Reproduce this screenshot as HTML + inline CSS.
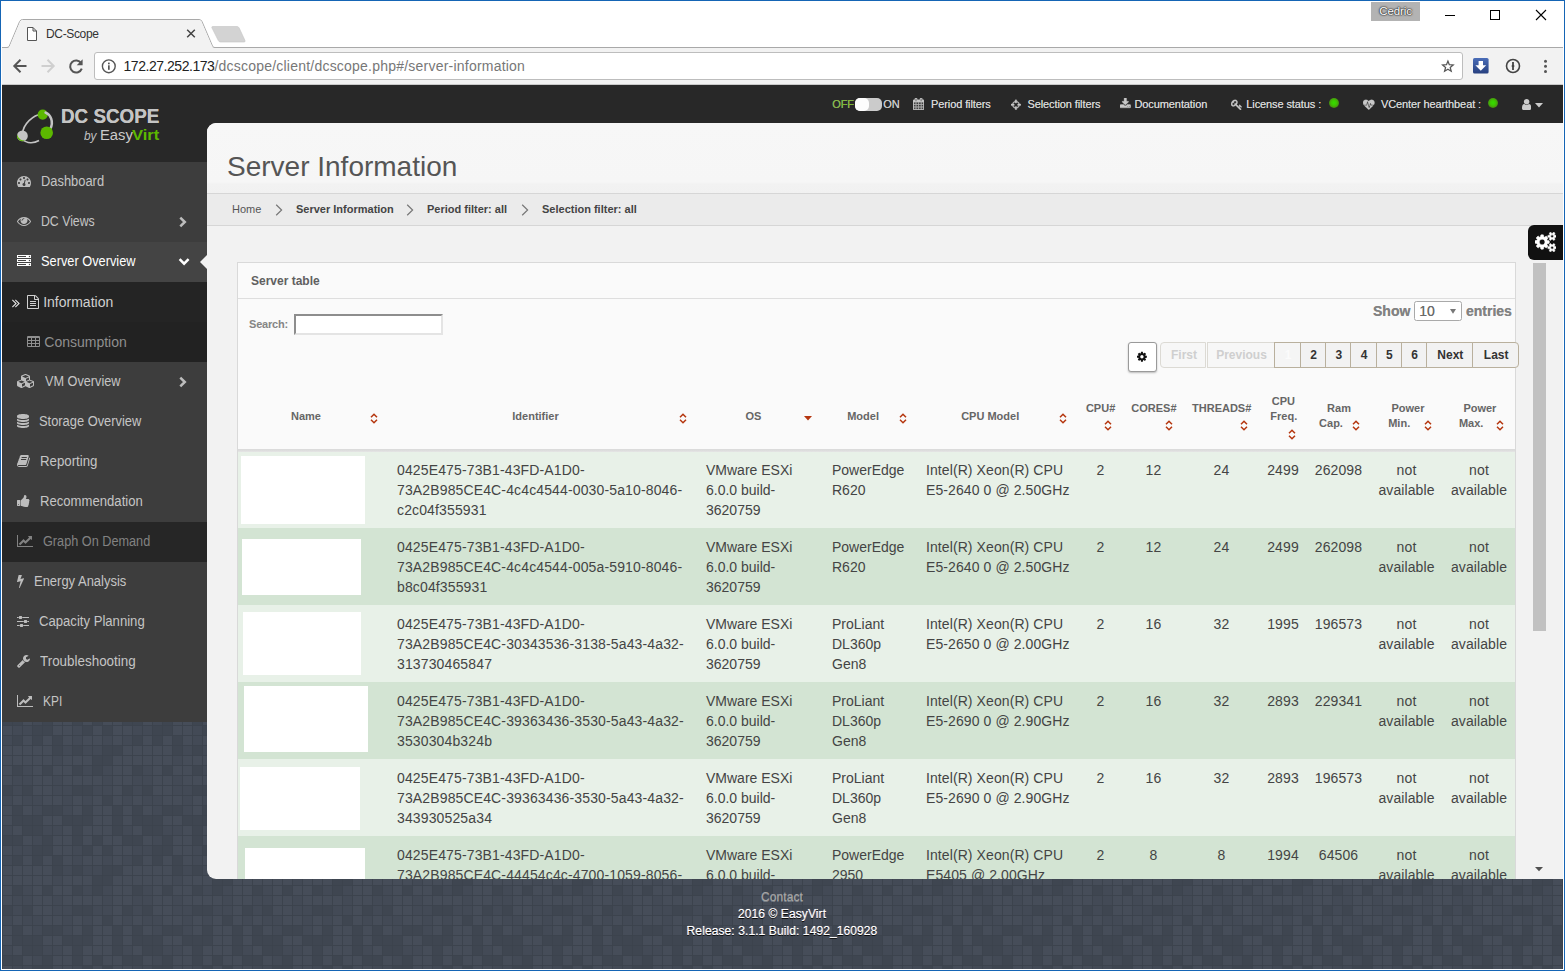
<!DOCTYPE html>
<html lang="en">
<head>
<meta charset="utf-8">
<title>DC-Scope</title>
<style>
*{box-sizing:border-box;margin:0;padding:0}
html,body{width:1565px;height:971px;overflow:hidden;background:#fff}
body{position:relative;font-family:"Liberation Sans",Arial,sans-serif;font-size:14px;color:#333}
.abs{position:absolute}
/* window frame */
#frame{position:absolute;left:0;top:0;width:1565px;height:971px;border:1px solid #1565b5;box-shadow:inset 0 0 0 1px #fff;pointer-events:none;z-index:50}
/* chrome */
#titlebar{position:absolute;left:1px;top:1px;width:1563px;height:46px;background:#fff}
#toolbar{position:absolute;left:1px;top:47px;width:1563px;height:38px;background:#f2f2f2;border-top:1px solid #b9b9b9;border-bottom:1px solid #c9c9c9}
#urlbox{position:absolute;left:94px;top:52px;width:1369px;height:28px;background:#fff;border:1px solid #bdbdbd;border-radius:3px}
#url{position:absolute;left:123.5px;top:58px;font-size:14px;line-height:16px;color:#222;white-space:nowrap;letter-spacing:-0.46px;z-index:6}
#url span{color:#777;letter-spacing:0.22px}
#tabtitle{position:absolute;left:46px;top:27px;font-size:12px;line-height:14px;color:#333;white-space:nowrap;z-index:6;letter-spacing:-0.35px}
#cedric{position:absolute;left:1371px;top:1px;width:49px;height:20px;background:#b3b3b3;color:#fff;font-size:11.5px;line-height:20px;text-align:center;letter-spacing:-0.1px;text-shadow:0 0 1px #333,0 0 1px #333,0 0 2px #444,0 0 2px #555;z-index:6}
/* page */
#page{position:absolute;left:2px;top:85px;width:1561px;height:884px;overflow:hidden;background:#434a56}
#topbar{position:absolute;left:0;top:0;width:1562px;height:46px;background:#282828}
.tbt{position:absolute;top:12px;font-size:11px;line-height:14px;color:#d6d6d6;white-space:nowrap;text-shadow:0 0 0.5px #bbb;letter-spacing:-0.1px}
.led{position:absolute;top:13px;width:10px;height:10px;border-radius:50%;background:radial-gradient(circle at 50% 48%,#36dc00 0,#3cc800 35%,#44a00c 60%,#4b6416 82%,#45451f 100%)}
#sidebar{position:absolute;left:0;top:0;width:205px;height:637px;background:#3d3d3d}
#logo{position:absolute;left:0;top:0;width:205px;height:77px;background:#282828}
.lg1{left:59px;top:19px;font-size:20.5px;line-height:24px;font-weight:bold;color:#c4c4c4;white-space:nowrap;transform-origin:0 50%;transform:scaleX(.918);text-shadow:0 0 0.6px #c4c4c4}
.lg2{left:82.3px;top:42.6px;font-size:12.5px;line-height:16px;font-style:italic;color:#c0c0c0;transform-origin:0 50%;transform:scaleX(.95)}
.lg3{left:98.2px;top:40.8px;font-size:15.5px;line-height:18px;color:#cbcbcb;transform-origin:0 50%;transform:scaleX(.955)}
.lg4{left:129.6px;top:40.8px;font-size:15.5px;line-height:18px;font-weight:bold;color:#5cb800;transform-origin:0 50%;transform:scaleX(1.07)}
.mi{position:absolute;left:0;width:205px;height:40px;color:#c9c9c9;font-size:14px;line-height:40px;white-space:nowrap}
.mi .t{position:absolute;top:-0.6px;transform-origin:0 50%;white-space:nowrap}
.mi .t2{position:absolute;top:0;white-space:nowrap}
#ptr{position:absolute;left:198px;top:170px;width:0;height:0;border:7px solid transparent;border-right:7px solid #f2f2f2;border-left:0}
#main{position:absolute;left:205px;top:38px;width:1357px;height:756px;background:#f2f2f2;border-radius:9px 0 0 9px;overflow:hidden}
#pagehead{position:absolute;left:0;top:0;width:1357px;height:70px;background:linear-gradient(#f7f7f7 0,#f6f6f6 59px,#f2f2f2 61px,#f1f1f1 100%)}
#pagehead h1{position:absolute;left:20px;top:27.4px;font-size:28px;line-height:34px;font-weight:normal;color:#555;white-space:nowrap}
#crumbs{position:absolute;left:0;top:70px;width:1357px;height:33px;background:#ebebeb;border-top:1px solid #d6d6d6;border-bottom:1px solid #d6d6d6;font-size:11px;color:#555}
#crumbs span{position:absolute;top:9px;line-height:13px;white-space:nowrap}
#crumbs b{color:#444}
#footer{position:absolute;left:0;top:804px;width:1560px;text-align:center;font-size:12px;line-height:17px;color:#fff;text-shadow:0 1px 0 #0a0a0a,0 0 0.7px #fff;letter-spacing:0.1px}
#footer .ct{color:#a6a6a6;text-shadow:0 1px 0 rgba(255,255,255,.3)}
#box{position:absolute;left:30px;top:139px;width:1279px;height:700px;border:1px solid #d9d9d9;background:#fafafa}
#boxhead{position:absolute;left:0;top:0;width:1277px;height:36px;border-bottom:1px solid #dedede;padding-left:13px;font-size:12px;font-weight:bold;line-height:37px;color:#606060}
#searchlbl{position:absolute;left:42px;top:194px;font-size:11px;font-weight:bold;line-height:14px;color:#858585;letter-spacing:-0.2px}
#searchinp{position:absolute;left:87px;top:191px;width:149px;height:21px;background:#fff;border:2px solid;border-color:#8d8d8d #e4e4e4 #e4e4e4 #8d8d8d}
#showlbl,#entlbl{position:absolute;top:180px;font-size:14px;font-weight:bold;line-height:16px;color:#828282;text-shadow:0 0 0.5px #909090}
#showlbl{left:1166px}
#entlbl{left:1259px}
#showsel{position:absolute;left:1207px;top:178px;width:48px;height:20px;border:1px solid #a9a9a9;border-radius:2.5px;background:#fff;font-size:14px;line-height:19px;color:#6a6a6a;text-shadow:0 0 0.5px #888}
#showsel span{position:absolute;left:4.2px;top:0}
#gearbtn{position:absolute;left:921px;top:219px;width:28.5px;height:29.5px;border:1px solid #9a9a9a;border-radius:3px;background:#fff;box-shadow:0 1px 2px rgba(0,0,0,.25)}
#pag{position:absolute;left:0;top:219px;height:26px}
.pb{position:absolute;top:0;height:26px;border:1px solid #b9b09d;background:#f2f2f2;font-size:12px;font-weight:bold;line-height:24px;text-align:center;color:#333;white-space:nowrap;padding-left:1.2px}
.pb.dis{color:#cfcfcf;border-color:#dcdad4;background:#f7f7f7}
.pb.act{color:#fbfbfb;background:#f5f5f5}
.pb:first-child{border-radius:4px 0 0 4px}
.pb:last-child{border-radius:0 4px 4px 0}
.th{position:absolute;width:100px;text-align:center;font-size:11px;font-weight:bold;line-height:15px;color:#666;white-space:nowrap}
#thline{position:absolute;left:31px;top:325.8px;width:1277px;height:3px;background:linear-gradient(#dadada,#dedede 60%,#e6e6e6);z-index:2}
#tbl{position:absolute;left:31px;top:328px;width:1277px;table-layout:fixed;border-collapse:collapse;font-size:14px;line-height:20px;color:#444}
#tbl td{padding:9px 8px 8px 8px;vertical-align:top;white-space:nowrap;overflow:visible;height:77px}
#tbl td.c{text-align:center;padding-left:0;padding-right:0}
#tbl td.nm{position:relative;padding:0}
#tbl tr.odd{background:#e8f1e8}
#tbl tr.even{background:#d3e4d3}
.wb{position:absolute;background:#fff}
#sbar{position:absolute;left:1323px;top:139px;width:18px;height:617px}
#sthumb{position:absolute;left:3px;top:1px;width:13px;height:368px;background:#c1c1c1}
#cogtab{position:absolute;left:1321px;top:102px;width:36px;height:35px;background:#111;border-radius:6px 0 0 6px}
#tbl td.id{letter-spacing:0.135px}
#tbl td.cm{letter-spacing:0.09px}
#tbl td.c{letter-spacing:0.1px}

</style>
</head>
<body>
<div id="titlebar"></div>
<div id="toolbar"></div>
<div id="urlbox"></div>
<svg id="chromesvg" class="abs" style="left:0;top:0;z-index:5" width="1565" height="85" viewBox="0 0 1565 85">
  <!-- new tab button -->
  <path d="M212.5 26.5 L237 26.5 Q238.5 26.5 239.2 28 L245 40.5 Q245.6 42 244 42 L220.5 42 Q219 42 218.3 40.5 L212 28 Q211.4 26.5 212.5 26.5Z" fill="#d3d3d3" stroke="#c4c4c4" stroke-width="0.6"/>
  <!-- tab -->
  <path d="M2 47.5 L7 47.5 Q8.6 47.5 9.3 46 L19.6 21.5 Q20.6 19.5 22.6 19.5 L199 19.5 Q201.1 19.5 202 21.5 L212.5 46 Q213.2 47.5 214.8 47.5 L1563 47.5" fill="none" stroke="#a9a9a9" stroke-width="1"/>
  <path d="M7.5 48 Q9 48 9.8 46.3 L20.1 22 Q21 20 22.8 20 L198.8 20 Q200.7 20 201.5 22 L212 46.3 Q212.8 48 214.3 48 L214.3 49 L7.5 49Z" fill="#f2f2f2"/>
  <!-- doc icon -->
  <path d="M27.5 27.5 L33 27.5 L36.5 31 L36.5 40.5 L27.5 40.5Z M33 27.5 L33 31 L36.5 31" fill="#fff" stroke="#555" stroke-width="1" stroke-linejoin="miter"/>
  <!-- tab close -->
  <path d="M187.2 29.7 L194.8 37.3 M194.8 29.7 L187.2 37.3" stroke="#444" stroke-width="1.5" fill="none"/>
  <!-- window controls -->
  <path d="M1445 15.5 L1455 15.5" stroke="#000" stroke-width="1"/>
  <rect x="1490.5" y="10.5" width="9" height="9" fill="none" stroke="#000" stroke-width="1"/>
  <path d="M1536 10 L1546 20 M1546 10 L1536 20" stroke="#000" stroke-width="1.1" fill="none"/>
  <!-- back -->
  <path d="M26.5 66 L14.5 66 M20.5 59.8 L14.3 66 L20.5 72.2" stroke="#555" stroke-width="2" fill="none"/>
  <!-- forward -->
  <path d="M41.5 66 L53.5 66 M47.5 59.8 L53.7 66 L47.5 72.2" stroke="#cfcfcf" stroke-width="2" fill="none"/>
  <!-- reload -->
  <path d="M81.2 63.2 A6 6 0 1 0 81.8 68.6" stroke="#555" stroke-width="2" fill="none"/>
  <path d="M82.6 59.3 L82.6 65.2 L76.7 65.2Z" fill="#555"/>
  <!-- info icon -->
  <circle cx="108.8" cy="66.3" r="6.4" fill="none" stroke="#555" stroke-width="1.4"/>
  <rect x="108" y="65.3" width="1.7" height="4.5" fill="#555"/><rect x="108" y="62.6" width="1.7" height="1.7" fill="#555"/>
  <!-- star -->
  <path d="M1447.9 61.1 L1449.3 64.7 L1453.2 65.0 L1450.2 67.5 L1451.2 71.2 L1447.9 69.2 L1444.6 71.2 L1445.6 67.5 L1442.6 65.0 L1446.5 64.7Z" fill="none" stroke="#555" stroke-width="1.25" stroke-linejoin="miter"/>
  <!-- download ext -->
  <defs><linearGradient id="dlg" x1="0" y1="0" x2="0" y2="1"><stop offset="0" stop-color="#4a6db8"/><stop offset="1" stop-color="#27407f"/></linearGradient></defs>
  <rect x="1473" y="58" width="15.6" height="15.6" rx="1.6" fill="url(#dlg)"/>
  <path d="M1478.6 61 L1483 61 L1483 65.2 L1486.2 65.2 L1480.8 70.8 L1475.4 65.2 L1478.6 65.2Z" fill="#fff"/>
  <!-- 1password-like -->
  <circle cx="1513" cy="66" r="6.5" fill="none" stroke="#444" stroke-width="1.6"/>
  <path d="M1512.1 62 L1513.9 62 L1513.9 65 L1514.6 66 L1513.9 67 L1513.9 70 L1512.1 70 L1512.1 67 L1511.4 66 L1512.1 65Z" fill="#444"/>
  <!-- menu dots -->
  <circle cx="1545.5" cy="61.2" r="1.5" fill="#555"/><circle cx="1545.5" cy="66.3" r="1.5" fill="#555"/><circle cx="1545.5" cy="71.4" r="1.5" fill="#555"/>
</svg>

<div id="url">172.27.252.173<span>/dcscope/client/dcscope.php#/server-information</span></div>
<div id="tabtitle">DC-Scope</div>
<div id="cedric">Cedric</div>
<div id="page">
<svg class="abs" style="left:0;top:0" width="1562" height="885"><defs><pattern id="tex" x="0" y="0" width="120" height="120" patternUnits="userSpaceOnUse"><rect width="120" height="120" fill="#3c434d"/><rect x="1" y="1" width="9" height="9" fill="#464d59"/><rect x="11" y="1" width="9" height="9" fill="#3f4651"/><rect x="21" y="1" width="9" height="9" fill="#464d59"/><rect x="31" y="1" width="9" height="9" fill="#434a56"/><rect x="41" y="1" width="9" height="9" fill="#3f4651"/><rect x="51" y="1" width="9" height="9" fill="#3f4651"/><rect x="61" y="1" width="9" height="9" fill="#434a56"/><rect x="71" y="1" width="9" height="9" fill="#464d59"/><rect x="81" y="1" width="9" height="9" fill="#3f4651"/><rect x="91" y="1" width="9" height="9" fill="#464d59"/><rect x="101" y="1" width="9" height="9" fill="#464d59"/><rect x="111" y="1" width="9" height="9" fill="#3f4651"/><rect x="1" y="11" width="9" height="9" fill="#464d59"/><rect x="11" y="11" width="9" height="9" fill="#3f4651"/><rect x="21" y="11" width="9" height="9" fill="#3f4651"/><rect x="31" y="11" width="9" height="9" fill="#3f4651"/><rect x="41" y="11" width="9" height="9" fill="#464d59"/><rect x="51" y="11" width="9" height="9" fill="#464d59"/><rect x="61" y="11" width="9" height="9" fill="#3f4651"/><rect x="71" y="11" width="9" height="9" fill="#3f4651"/><rect x="81" y="11" width="9" height="9" fill="#3f4651"/><rect x="91" y="11" width="9" height="9" fill="#464d59"/><rect x="101" y="11" width="9" height="9" fill="#464d59"/><rect x="111" y="11" width="9" height="9" fill="#3f4651"/><rect x="1" y="21" width="9" height="9" fill="#434a56"/><rect x="11" y="21" width="9" height="9" fill="#464d59"/><rect x="21" y="21" width="9" height="9" fill="#3f4651"/><rect x="31" y="21" width="9" height="9" fill="#3f4651"/><rect x="41" y="21" width="9" height="9" fill="#434a56"/><rect x="51" y="21" width="9" height="9" fill="#434a56"/><rect x="61" y="21" width="9" height="9" fill="#464d59"/><rect x="71" y="21" width="9" height="9" fill="#3f4651"/><rect x="81" y="21" width="9" height="9" fill="#464d59"/><rect x="91" y="21" width="9" height="9" fill="#464d59"/><rect x="101" y="21" width="9" height="9" fill="#464d59"/><rect x="111" y="21" width="9" height="9" fill="#3f4651"/><rect x="1" y="31" width="9" height="9" fill="#3f4651"/><rect x="11" y="31" width="9" height="9" fill="#3f4651"/><rect x="21" y="31" width="9" height="9" fill="#464d59"/><rect x="31" y="31" width="9" height="9" fill="#434a56"/><rect x="41" y="31" width="9" height="9" fill="#3f4651"/><rect x="51" y="31" width="9" height="9" fill="#464d59"/><rect x="61" y="31" width="9" height="9" fill="#464d59"/><rect x="71" y="31" width="9" height="9" fill="#3f4651"/><rect x="81" y="31" width="9" height="9" fill="#464d59"/><rect x="91" y="31" width="9" height="9" fill="#3f4651"/><rect x="101" y="31" width="9" height="9" fill="#464d59"/><rect x="111" y="31" width="9" height="9" fill="#464d59"/><rect x="1" y="41" width="9" height="9" fill="#464d59"/><rect x="11" y="41" width="9" height="9" fill="#434a56"/><rect x="21" y="41" width="9" height="9" fill="#434a56"/><rect x="31" y="41" width="9" height="9" fill="#3f4651"/><rect x="41" y="41" width="9" height="9" fill="#3f4651"/><rect x="51" y="41" width="9" height="9" fill="#464d59"/><rect x="61" y="41" width="9" height="9" fill="#464d59"/><rect x="71" y="41" width="9" height="9" fill="#434a56"/><rect x="81" y="41" width="9" height="9" fill="#3f4651"/><rect x="91" y="41" width="9" height="9" fill="#464d59"/><rect x="101" y="41" width="9" height="9" fill="#3f4651"/><rect x="111" y="41" width="9" height="9" fill="#464d59"/><rect x="1" y="51" width="9" height="9" fill="#434a56"/><rect x="11" y="51" width="9" height="9" fill="#3f4651"/><rect x="21" y="51" width="9" height="9" fill="#464d59"/><rect x="31" y="51" width="9" height="9" fill="#3f4651"/><rect x="41" y="51" width="9" height="9" fill="#464d59"/><rect x="51" y="51" width="9" height="9" fill="#3f4651"/><rect x="61" y="51" width="9" height="9" fill="#464d59"/><rect x="71" y="51" width="9" height="9" fill="#434a56"/><rect x="81" y="51" width="9" height="9" fill="#464d59"/><rect x="91" y="51" width="9" height="9" fill="#464d59"/><rect x="101" y="51" width="9" height="9" fill="#434a56"/><rect x="111" y="51" width="9" height="9" fill="#464d59"/><rect x="1" y="61" width="9" height="9" fill="#464d59"/><rect x="11" y="61" width="9" height="9" fill="#464d59"/><rect x="21" y="61" width="9" height="9" fill="#464d59"/><rect x="31" y="61" width="9" height="9" fill="#464d59"/><rect x="41" y="61" width="9" height="9" fill="#464d59"/><rect x="51" y="61" width="9" height="9" fill="#3f4651"/><rect x="61" y="61" width="9" height="9" fill="#434a56"/><rect x="71" y="61" width="9" height="9" fill="#3f4651"/><rect x="81" y="61" width="9" height="9" fill="#434a56"/><rect x="91" y="61" width="9" height="9" fill="#434a56"/><rect x="101" y="61" width="9" height="9" fill="#3f4651"/><rect x="111" y="61" width="9" height="9" fill="#3f4651"/><rect x="1" y="71" width="9" height="9" fill="#464d59"/><rect x="11" y="71" width="9" height="9" fill="#464d59"/><rect x="21" y="71" width="9" height="9" fill="#464d59"/><rect x="31" y="71" width="9" height="9" fill="#464d59"/><rect x="41" y="71" width="9" height="9" fill="#464d59"/><rect x="51" y="71" width="9" height="9" fill="#434a56"/><rect x="61" y="71" width="9" height="9" fill="#464d59"/><rect x="71" y="71" width="9" height="9" fill="#464d59"/><rect x="81" y="71" width="9" height="9" fill="#464d59"/><rect x="91" y="71" width="9" height="9" fill="#3f4651"/><rect x="101" y="71" width="9" height="9" fill="#3f4651"/><rect x="111" y="71" width="9" height="9" fill="#464d59"/><rect x="1" y="81" width="9" height="9" fill="#464d59"/><rect x="11" y="81" width="9" height="9" fill="#3f4651"/><rect x="21" y="81" width="9" height="9" fill="#434a56"/><rect x="31" y="81" width="9" height="9" fill="#464d59"/><rect x="41" y="81" width="9" height="9" fill="#3f4651"/><rect x="51" y="81" width="9" height="9" fill="#464d59"/><rect x="61" y="81" width="9" height="9" fill="#464d59"/><rect x="71" y="81" width="9" height="9" fill="#3f4651"/><rect x="81" y="81" width="9" height="9" fill="#434a56"/><rect x="91" y="81" width="9" height="9" fill="#3f4651"/><rect x="101" y="81" width="9" height="9" fill="#434a56"/><rect x="111" y="81" width="9" height="9" fill="#464d59"/><rect x="1" y="91" width="9" height="9" fill="#464d59"/><rect x="11" y="91" width="9" height="9" fill="#434a56"/><rect x="21" y="91" width="9" height="9" fill="#434a56"/><rect x="31" y="91" width="9" height="9" fill="#464d59"/><rect x="41" y="91" width="9" height="9" fill="#464d59"/><rect x="51" y="91" width="9" height="9" fill="#434a56"/><rect x="61" y="91" width="9" height="9" fill="#464d59"/><rect x="71" y="91" width="9" height="9" fill="#464d59"/><rect x="81" y="91" width="9" height="9" fill="#464d59"/><rect x="91" y="91" width="9" height="9" fill="#464d59"/><rect x="101" y="91" width="9" height="9" fill="#434a56"/><rect x="111" y="91" width="9" height="9" fill="#464d59"/><rect x="1" y="101" width="9" height="9" fill="#3f4651"/><rect x="11" y="101" width="9" height="9" fill="#434a56"/><rect x="21" y="101" width="9" height="9" fill="#3f4651"/><rect x="31" y="101" width="9" height="9" fill="#464d59"/><rect x="41" y="101" width="9" height="9" fill="#464d59"/><rect x="51" y="101" width="9" height="9" fill="#434a56"/><rect x="61" y="101" width="9" height="9" fill="#434a56"/><rect x="71" y="101" width="9" height="9" fill="#3f4651"/><rect x="81" y="101" width="9" height="9" fill="#3f4651"/><rect x="91" y="101" width="9" height="9" fill="#434a56"/><rect x="101" y="101" width="9" height="9" fill="#434a56"/><rect x="111" y="101" width="9" height="9" fill="#464d59"/><rect x="1" y="111" width="9" height="9" fill="#434a56"/><rect x="11" y="111" width="9" height="9" fill="#464d59"/><rect x="21" y="111" width="9" height="9" fill="#434a56"/><rect x="31" y="111" width="9" height="9" fill="#434a56"/><rect x="41" y="111" width="9" height="9" fill="#464d59"/><rect x="51" y="111" width="9" height="9" fill="#464d59"/><rect x="61" y="111" width="9" height="9" fill="#434a56"/><rect x="71" y="111" width="9" height="9" fill="#464d59"/><rect x="81" y="111" width="9" height="9" fill="#434a56"/><rect x="91" y="111" width="9" height="9" fill="#464d59"/><rect x="101" y="111" width="9" height="9" fill="#3f4651"/><rect x="111" y="111" width="9" height="9" fill="#464d59"/></pattern></defs><rect width="1562" height="885" fill="url(#tex)"/></svg>
<div id="topbar">
<span class="tbt" style="left:830.2px;color:#7ab82e">OFF</span>
<div class="abs" style="left:853px;top:13px;width:27px;height:12.5px;border-radius:5px;background:#cbcbcb"><div style="width:13.5px;height:12.5px;border-radius:5px;background:#fdfdfd"></div></div>
<span class="tbt" style="left:881.3px;color:#ccc">ON</span>
<svg class="abs" style="left:910.9px;top:13.0px" width="11.14" height="12" viewBox="0 -1536 1664 1792"><path fill="#c8c8c8" stroke="#c8c8c8" stroke-width="50" transform="scale(1,-1)" d="M128 -128V160H416V-128ZM480 -128V160H800V-128ZM128 224V544H416V224ZM480 224V544H800V224ZM128 608V896H416V608ZM864 -128V160H1184V-128ZM480 608V896H800V608ZM1248 -128V160H1536V-128ZM864 224V544H1184V224ZM512 1088C512 1071 497 1056 480 1056H416C399 1056 384 1071 384 1088V1376C384 1393 399 1408 416 1408H480C497 1408 512 1393 512 1376V1088ZM1248 224V544H1536V224ZM864 608V896H1184V608ZM1248 608V896H1536V608ZM1280 1088C1280 1071 1265 1056 1248 1056H1184C1167 1056 1152 1071 1152 1088V1376C1152 1393 1167 1408 1184 1408H1248C1265 1408 1280 1393 1280 1376V1088ZM1664 1152C1664 1222 1606 1280 1536 1280H1408V1376C1408 1464 1336 1536 1248 1536H1184C1096 1536 1024 1464 1024 1376V1280H640V1376C640 1464 568 1536 480 1536H416C328 1536 256 1464 256 1376V1280H128C58 1280 0 1222 0 1152V-128C0 -198 58 -256 128 -256H1536C1606 -256 1664 -198 1664 -128Z"/></svg>
<span class="tbt" style="left:929.0px">Period filters</span>
<svg class="abs" style="left:1008.9px;top:13.8px" width="9.86" height="11.5" viewBox="0 -1536 1536 1792"><path fill="#c8c8c8" stroke="#c8c8c8" stroke-width="50" transform="scale(1,-1)" d="M1197 512C1154 368 1040 254 896 211V320C896 355 867 384 832 384H704C669 384 640 355 640 320V211C496 254 382 368 339 512H448C483 512 512 541 512 576V704C512 739 483 768 448 768H339C382 912 496 1026 640 1069V960C640 925 669 896 704 896H832C867 896 896 925 896 960V1069C1040 1026 1154 912 1197 768H1088C1053 768 1024 739 1024 704V576C1024 541 1053 512 1088 512H1197ZM1536 704C1536 739 1507 768 1472 768H1329C1280 983 1111 1152 896 1201V1344C896 1379 867 1408 832 1408H704C669 1408 640 1379 640 1344V1201C425 1152 256 983 207 768H64C29 768 0 739 0 704V576C0 541 29 512 64 512H207C256 297 425 128 640 79V-64C640 -99 669 -128 704 -128H832C867 -128 896 -99 896 -64V79C1111 128 1280 297 1329 512H1472C1507 512 1536 541 1536 576Z"/></svg>
<span class="tbt" style="left:1025.5px">Selection filters</span>
<svg class="abs" style="left:1117.9px;top:13.2px" width="10.68" height="11.5" viewBox="0 -1536 1664 1792"><path fill="#c8c8c8" stroke="#c8c8c8" stroke-width="50" transform="scale(1,-1)" d="M1280 192C1280 157 1251 128 1216 128C1181 128 1152 157 1152 192C1152 227 1181 256 1216 256C1251 256 1280 227 1280 192ZM1536 192C1536 157 1507 128 1472 128C1437 128 1408 157 1408 192C1408 227 1437 256 1472 256C1507 256 1536 227 1536 192ZM1664 416C1664 469 1621 512 1568 512H1104L968 376C931 340 883 320 832 320C781 320 733 340 696 376L561 512H96C43 512 0 469 0 416V96C0 43 43 0 96 0H1568C1621 0 1664 43 1664 96ZM1339 985C1329 1008 1306 1024 1280 1024H1024V1472C1024 1507 995 1536 960 1536H704C669 1536 640 1507 640 1472V1024H384C358 1024 335 1008 325 985C315 961 320 933 339 915L787 467C799 454 816 448 832 448C848 448 865 454 877 467L1325 915C1344 933 1349 961 1339 985Z"/></svg>
<span class="tbt" style="left:1132.5px">Documentation</span>
<svg class="abs" style="left:1228.8px;top:13.8px" width="11.50" height="11.5" viewBox="0 -1536 1792 1792"><path fill="#c8c8c8" stroke="#c8c8c8" stroke-width="50" transform="scale(1,-1)" d="M832 1024C832 918 746 832 640 832C611 832 583 839 557 851C569 825 576 797 576 768C576 662 490 576 384 576C278 576 192 662 192 768C192 874 278 960 384 960C413 960 441 953 467 941C455 967 448 995 448 1024C448 1130 534 1216 640 1216C746 1216 832 1130 832 1024ZM1683 320C1683 349 1404 612 1367 649C1361 655 1352 659 1344 659C1321 659 1229 567 1229 544C1229 518 1323 437 1344 416L1248 320L893 675C971 780 1024 908 1024 1040C1024 1258 873 1408 656 1408C328 1408 0 1080 0 752C0 535 150 384 368 384C500 384 628 437 733 515L1404 -156C1422 -174 1447 -184 1472 -184C1528 -184 1592 -120 1592 -64C1592 -39 1582 -14 1564 4L1344 224L1440 320C1461 299 1542 205 1568 205C1591 205 1683 297 1683 320Z"/></svg>
<span class="tbt" style="left:1244.3px">License status :</span>
<div class="led" style="left:1327.0px"></div>
<svg class="abs" style="left:1361.0px;top:13.8px" width="11.50" height="11.5" viewBox="0 -1536 1792 1792"><path fill="#c8c8c8" stroke="#c8c8c8" stroke-width="50" transform="scale(1,-1)" d="M1280 512C1256 512 1234 526 1223 547L1167 659L1021 174C1013 147 988 128 960 128C960 128 960 128 960 128C931 128 906 147 898 174L708 841L638 560C631 532 605 512 576 512H207C218 500 226 493 228 492L852 -110C864 -122 880 -128 896 -128C912 -128 928 -122 940 -110L1563 490C1565 492 1573 499 1585 512ZM1792 940C1792 1233 1613 1408 1314 1408C1139 1408 975 1270 896 1192C817 1270 653 1408 478 1408C179 1408 0 1233 0 940C0 825 50 720 103 640H526L642 1104C649 1132 674 1152 703 1152C733 1152 758 1133 766 1106L962 420L1091 850C1098 876 1120 893 1147 896C1172 898 1198 884 1209 861L1320 640H1689C1742 720 1792 825 1792 940Z"/></svg>
<span class="tbt" style="left:1378.9px">VCenter hearthbeat :</span>
<div class="led" style="left:1485.8px"></div>
<svg class="abs" style="left:1519.7px;top:12.5px" width="9.29" height="13" viewBox="0 -1536 1280 1792"><path fill="#ccc" stroke="#ccc" stroke-width="0" transform="scale(1,-1)" d="M1280 137C1280 400 1215 704 953 704C872 625 762 576 640 576C518 576 408 625 327 704C65 704 0 400 0 137C0 -9 96 -128 213 -128H1067C1184 -128 1280 -9 1280 137ZM1024 1024C1024 1236 852 1408 640 1408C428 1408 256 1236 256 1024C256 812 428 640 640 640C852 640 1024 812 1024 1024Z"/></svg>
<svg class="abs" style="left:1533.0px;top:17.5px" width="8" height="5" viewBox="0 0 8 5"><path d="M0 0 L8 0 L4 4.5Z" fill="#ccc"/></svg>
</div>
<div id="sidebar">
<div id="logo">
<svg class="abs" style="left:10px;top:15px" width="50" height="50" viewBox="12 100 50 50">
 <path d="M22.5 134 C23 124 33 115 42 114" fill="none" stroke="#c4c4c4" stroke-width="1.6"/>
 <path d="M22 139 C27 144 34 143.5 39 140.5" fill="none" stroke="#c4c4c4" stroke-width="1.5"/>
 <circle cx="42.7" cy="114.6" r="5.1" fill="#5cb800"/>
 <path d="M45.6 112.6 C50.5 114.5 54 121.5 50.3 129" fill="none" stroke="#c4c4c4" stroke-width="2.5" stroke-linecap="round"/>
 <circle cx="46.7" cy="132.7" r="6.3" fill="#5cb800"/>
 <circle cx="22.4" cy="135.9" r="5.4" fill="#c4c4c4"/>
 <path d="M17.2 134.5 A5.4 5.4 0 0 0 25.5 140.3 A7 7 0 0 1 17.2 134.5Z" fill="#5cb800"/>
</svg>
<span class="abs lg1">DC SCOPE</span>
<span class="abs lg2">by</span>
<span class="abs lg3">Easy</span>
<span class="abs lg4">Virt</span>
</div>
<div class="mi" style="top:77px;color:#c5c5c5;"><svg class="abs" style="left:15.0px;top:12.2px" width="14.00" height="14" viewBox="0 -1536 1792 1792"><path fill="#bdbdbd" stroke="#bdbdbd" stroke-width="0" transform="scale(1,-1)" d="M384 384C384 313 327 256 256 256C185 256 128 313 128 384C128 455 185 512 256 512C327 512 384 455 384 384ZM576 832C576 761 519 704 448 704C377 704 320 761 320 832C320 903 377 960 448 960C519 960 576 903 576 832ZM1004 351C1069 306 1103 224 1082 143C1055 41 950 -21 847 6C745 33 683 138 710 241C732 322 801 377 880 383L981 765C990 799 1025 820 1059 811C1093 802 1113 767 1105 733ZM1664 384C1664 313 1607 256 1536 256C1465 256 1408 313 1408 384C1408 455 1465 512 1536 512C1607 512 1664 455 1664 384ZM1024 1024C1024 953 967 896 896 896C825 896 768 953 768 1024C768 1095 825 1152 896 1152C967 1152 1024 1095 1024 1024ZM1472 832C1472 761 1415 704 1344 704C1273 704 1216 761 1216 832C1216 903 1273 960 1344 960C1415 960 1472 903 1472 832ZM1792 384C1792 878 1390 1280 896 1280C402 1280 0 878 0 384C0 212 49 45 141 -99C153 -117 173 -128 195 -128H1597C1619 -128 1639 -117 1651 -99C1743 46 1792 212 1792 384Z"/></svg><span class="t" style="left:39.3px;transform:scaleX(0.9212)">Dashboard</span></div>
<div class="mi" style="top:117px;color:#c5c5c5;"><svg class="abs" style="left:15.0px;top:12.2px" width="14.00" height="14" viewBox="0 -1536 1792 1792"><path fill="#bdbdbd" stroke="#bdbdbd" stroke-width="0" transform="scale(1,-1)" d="M1664 576C1493 312 1217 128 896 128C575 128 299 312 128 576C223 723 353 849 509 929C469 861 448 783 448 704C448 457 649 256 896 256C1143 256 1344 457 1344 704C1344 783 1323 861 1283 929C1439 849 1569 723 1664 576ZM944 960C944 934 922 912 896 912C782 912 688 818 688 704C688 678 666 656 640 656C614 656 592 678 592 704C592 871 729 1008 896 1008C922 1008 944 986 944 960ZM1792 576C1792 601 1784 624 1772 645C1588 947 1251 1152 896 1152C541 1152 204 947 20 645C8 624 0 601 0 576C0 551 8 528 20 507C204 205 541 0 896 0C1251 0 1588 204 1772 507C1784 528 1792 551 1792 576Z"/></svg><span class="t" style="left:39.4px;transform:scaleX(0.8775)">DC Views</span><svg class="abs" style="left:176px;top:14px" width="10" height="12" viewBox="0 0 10 12"><path d="M2.3 1.6 L6.8 6 L2.3 10.4" fill="none" stroke="#bdbdbd" stroke-width="2.5"/></svg></div>
<div class="mi" style="top:157px;color:#ffffff;background:#444444;"><svg class="abs" style="left:15.0px;top:12.2px" width="14.00" height="14" viewBox="0 -1536 1792 1792"><path fill="#ffffff" stroke="#ffffff" stroke-width="0" transform="scale(1,-1)" d="M128 128V256H1152V128ZM128 640V768H1152V640ZM1696 192C1696 139 1653 96 1600 96C1547 96 1504 139 1504 192C1504 245 1547 288 1600 288C1653 288 1696 245 1696 192ZM128 1152V1280H1152V1152ZM1696 704C1696 651 1653 608 1600 608C1547 608 1504 651 1504 704C1504 757 1547 800 1600 800C1653 800 1696 757 1696 704ZM1696 1216C1696 1163 1653 1120 1600 1120C1547 1120 1504 1163 1504 1216C1504 1269 1547 1312 1600 1312C1653 1312 1696 1269 1696 1216ZM1792 384H0V0H1792ZM1792 896H0V512H1792ZM1792 1408H0V1024H1792Z"/></svg><span class="t" style="left:39.3px;transform:scaleX(0.9133)">Server Overview</span><svg class="abs" style="left:176px;top:15px" width="12" height="10" viewBox="0 0 12 10"><path d="M1.6 2.2 L6.1 6.7 L10.6 2.2" fill="none" stroke="#fff" stroke-width="2.5"/></svg></div>
<div class="mi" style="top:277px;color:#c5c5c5;"><svg class="abs" style="left:15.0px;top:12.2px" width="18.00" height="14" viewBox="0 -1536 2304 1792"><path fill="#bdbdbd" stroke="#bdbdbd" stroke-width="0" transform="scale(1,-1)" d="M640 -96V246L1024 410V96ZM576 358 172 531 576 704 980 531ZM1664 -96V246L2048 410V96ZM1600 358 1196 531 1600 704 2004 531ZM1152 651V918L1536 1082V816ZM1088 1030 647 1219 1088 1408 1529 1219ZM2176 512C2176 563 2146 609 2098 630L1664 816V1216C1664 1267 1633 1313 1586 1334L1138 1526C1122 1533 1105 1536 1088 1536C1071 1536 1054 1533 1038 1526L590 1334C543 1313 512 1267 512 1216V816L78 630C31 609 0 563 0 512V96C0 48 27 3 71 -18L519 -242C537 -252 556 -256 576 -256C596 -256 615 -252 633 -242L1081 -18C1084 -17 1086 -16 1088 -14C1090 -16 1092 -17 1095 -18L1543 -242C1561 -252 1580 -256 1600 -256C1620 -256 1639 -252 1657 -242L2105 -18C2149 3 2176 48 2176 96Z"/></svg><span class="t" style="left:43.0px;transform:scaleX(0.9071)">VM Overview</span><svg class="abs" style="left:176px;top:14px" width="10" height="12" viewBox="0 0 10 12"><path d="M2.3 1.6 L6.8 6 L2.3 10.4" fill="none" stroke="#bdbdbd" stroke-width="2.5"/></svg></div>
<div class="mi" style="top:317px;color:#c5c5c5;"><svg class="abs" style="left:15.0px;top:12.2px" width="12.00" height="14" viewBox="0 -1536 1536 1792"><path fill="#bdbdbd" stroke="#bdbdbd" stroke-width="0" transform="scale(1,-1)" d="M768 768C467 768 165 822 0 938V768C0 627 344 512 768 512C1192 512 1536 627 1536 768V938C1371 822 1069 768 768 768ZM768 0C467 0 165 54 0 170V0C0 -141 344 -256 768 -256C1192 -256 1536 -141 1536 0V170C1371 54 1069 0 768 0ZM768 384C467 384 165 438 0 554V384C0 243 344 128 768 128C1192 128 1536 243 1536 384V554C1371 438 1069 384 768 384ZM768 1536C344 1536 0 1421 0 1280V1152C0 1011 344 896 768 896C1192 896 1536 1011 1536 1152V1280C1536 1421 1192 1536 768 1536Z"/></svg><span class="t" style="left:37.2px;transform:scaleX(0.9193)">Storage Overview</span></div>
<div class="mi" style="top:357px;color:#c5c5c5;"><svg class="abs" style="left:15.0px;top:12.2px" width="13.00" height="14" viewBox="0 -1536 1664 1792"><path fill="#bdbdbd" stroke="#bdbdbd" stroke-width="0" transform="scale(1,-1)" d="M1639 1058C1624 1078 1603 1092 1580 1101C1581 1083 1581 1063 1575 1044L1275 57C1264 21 1221 0 1184 0H261C206 0 137 12 117 70C109 92 110 101 118 113C127 125 143 128 156 128H1025C1152 128 1178 162 1225 316L1499 1222C1513 1269 1507 1316 1481 1352C1456 1387 1414 1408 1367 1408H606C589 1408 572 1403 555 1399L556 1402C429 1438 421 1301 379 1239C363 1216 339 1196 335 1177C332 1159 342 1142 340 1125C334 1072 294 977 270 944C255 924 233 914 226 891C220 875 230 852 228 831C223 784 188 695 161 649C151 631 132 617 127 598C122 581 132 559 127 540C116 488 82 407 52 357C36 330 15 313 11 289C9 277 18 264 17 248C16 224 12 204 10 184C-4 146 -4 102 12 57C49 -47 158 -128 260 -128H1183C1269 -128 1357 -62 1382 23L1657 929C1671 975 1664 1022 1639 1058ZM575 1056 596 1120C602 1138 621 1152 638 1152H1246C1264 1152 1274 1138 1268 1120L1247 1056C1241 1038 1222 1024 1205 1024H597C579 1024 569 1038 575 1056ZM492 800 513 864C519 882 538 896 555 896H1163C1181 896 1191 882 1185 864L1164 800C1158 782 1139 768 1122 768H514C496 768 486 782 492 800Z"/></svg><span class="t" style="left:38.2px;transform:scaleX(0.9456)">Reporting</span></div>
<div class="mi" style="top:397px;color:#c5c5c5;"><svg class="abs" style="left:15.0px;top:12.2px" width="13.00" height="14" viewBox="0 -1536 1664 1792"><path fill="#bdbdbd" stroke="#bdbdbd" stroke-width="0" transform="scale(1,-1)" d="M256 192C256 156 227 128 192 128C156 128 128 156 128 192C128 227 156 256 192 256C227 256 256 227 256 192ZM416 704C416 739 387 768 352 768H64C29 768 0 739 0 704V64C0 29 29 0 64 0H352C387 0 416 29 416 64ZM1600 704C1600 808 1512 896 1408 896H1131C1139 928 1149 938 1160 960C1187 1012 1216 1070 1216 1152C1216 1229 1216 1408 992 1408C975 1408 959 1401 947 1389C904 1347 892 1285 881 1226C869 1168 858 1108 819 1069C788 1038 754 995 718 949C674 891 578 772 541 769C508 766 480 738 480 705V64C480 29 510 1 544 0C579 -1 639 -22 702 -44C810 -81 945 -128 1088 -128H1105H1181C1199 -128 1213 -128 1217 -128C1305 -127 1371 -101 1414 -50C1452 -5 1469 56 1463 131C1488 155 1507 188 1517 225C1528 265 1528 305 1517 342C1547 382 1562 429 1560 479C1560 493 1556 523 1545 555C1579 594 1600 651 1600 704Z"/></svg><span class="t" style="left:38.2px;transform:scaleX(0.9368)">Recommendation</span></div>
<div class="mi" style="top:437px;color:#828282;background:#262626;"><svg class="abs" style="left:15.0px;top:12.2px" width="16.00" height="14" viewBox="0 -1536 2048 1792"><path fill="#828282" stroke="#828282" stroke-width="0" transform="scale(1,-1)" d="M2048 0H128V1408H0V-128H2048ZM1920 1248C1920 1266 1906 1280 1888 1280H1453C1425 1280 1410 1246 1431 1225L1552 1104L1088 640L855 873C842 886 822 886 809 873L224 288L416 96L832 512L1065 279C1078 266 1098 266 1111 279L1744 912L1865 791C1886 770 1920 785 1920 813Z"/></svg><span class="t" style="left:41.2px;transform:scaleX(0.9062)">Graph On Demand</span></div>
<div class="mi" style="top:477px;color:#c5c5c5;"><svg class="abs" style="left:15.0px;top:12.2px" width="7.00" height="14" viewBox="0 -1536 896 1792"><path fill="#bdbdbd" stroke="#bdbdbd" stroke-width="0" transform="scale(1,-1)" d="M885 970C876 979 864 985 851 985C847 985 843 984 839 983L443 885L614 1348C617 1354 619 1360 619 1366C619 1389 599 1408 574 1408H246C225 1408 207 1395 202 1376L1 551C-2 537 2 522 14 512C22 505 34 501 45 501C49 501 53 501 57 502L463 603L266 -205C261 -226 274 -247 296 -254C301 -255 306 -256 310 -256C328 -256 344 -246 352 -231L892 926C899 941 896 958 885 970Z"/></svg><span class="t" style="left:32.3px;transform:scaleX(0.9267)">Energy Analysis</span></div>
<div class="mi" style="top:517px;color:#c5c5c5;"><svg class="abs" style="left:15.0px;top:12.2px" width="12.00" height="14" viewBox="0 -1536 1536 1792"><path fill="#bdbdbd" stroke="#bdbdbd" stroke-width="0" transform="scale(1,-1)" d="M352 128H0V0H352ZM704 256H448C413 256 384 227 384 192V-64C384 -99 413 -128 448 -128H704C739 -128 768 -99 768 -64V192C768 227 739 256 704 256ZM864 640H0V512H864ZM224 1152H0V1024H224ZM1536 128H800V0H1536ZM576 1280H320C285 1280 256 1251 256 1216V960C256 925 285 896 320 896H576C611 896 640 925 640 960V1216C640 1251 611 1280 576 1280ZM1216 768H960C925 768 896 739 896 704V448C896 413 925 384 960 384H1216C1251 384 1280 413 1280 448V704C1280 739 1251 768 1216 768ZM1536 640H1312V512H1536ZM1536 1152H672V1024H1536Z"/></svg><span class="t" style="left:37.2px;transform:scaleX(0.9366)">Capacity Planning</span></div>
<div class="mi" style="top:557px;color:#c5c5c5;"><svg class="abs" style="left:15.0px;top:12.2px" width="13.00" height="14" viewBox="0 -1536 1664 1792"><path fill="#bdbdbd" stroke="#bdbdbd" stroke-width="0" transform="scale(1,-1)" d="M384 64C384 29 355 0 320 0C285 0 256 29 256 64C256 99 285 128 320 128C355 128 384 99 384 64ZM1028 484C897 536 792 641 740 772L59 91C35 67 21 34 21 0C21 -34 35 -67 59 -90L165 -198C189 -221 222 -235 256 -235C290 -235 323 -221 346 -198L1028 484ZM1662 919C1662 939 1650 954 1630 954C1610 954 1378 808 1345 789L1152 896V1120L1445 1289C1454 1295 1461 1306 1461 1317C1461 1329 1455 1338 1445 1345C1384 1386 1289 1408 1216 1408C969 1408 768 1207 768 960C768 713 969 512 1216 512C1405 512 1576 635 1639 813C1650 845 1662 886 1662 919Z"/></svg><span class="t" style="left:38.2px;transform:scaleX(0.9580)">Troubleshooting</span></div>
<div class="mi" style="top:597px;color:#c5c5c5;"><svg class="abs" style="left:15.0px;top:12.2px" width="16.00" height="14" viewBox="0 -1536 2048 1792"><path fill="#bdbdbd" stroke="#bdbdbd" stroke-width="0" transform="scale(1,-1)" d="M2048 0H128V1408H0V-128H2048ZM1920 1248C1920 1266 1906 1280 1888 1280H1453C1425 1280 1410 1246 1431 1225L1552 1104L1088 640L855 873C842 886 822 886 809 873L224 288L416 96L832 512L1065 279C1078 266 1098 266 1111 279L1744 912L1865 791C1886 770 1920 785 1920 813Z"/></svg><span class="t" style="left:41.2px;transform:scaleX(0.8503)">KPI</span></div>
<div class="mi sub" style="top:197px;background:#242424;color:#d0d0d0"><svg class="abs" style="left:9.8px;top:13.5px" width="8.00" height="14" viewBox="0 -1536 1024 1792"><path fill="#e8e8e8" stroke="#e8e8e8" stroke-width="0" transform="scale(1,-1)" d="M595 576C595 584 591 593 585 599L119 1065C113 1071 104 1075 96 1075C88 1075 79 1071 73 1065L23 1015C17 1009 13 1000 13 992C13 984 17 975 23 969L416 576L23 183C17 177 13 168 13 160C13 152 17 143 23 137L73 87C79 81 88 77 96 77C104 77 113 81 119 87L585 553C591 559 595 568 595 576ZM979 576C979 584 975 593 969 599L503 1065C497 1071 488 1075 480 1075C472 1075 463 1071 457 1065L407 1015C401 1009 397 1000 397 992C397 984 401 975 407 969L800 576L407 183C401 177 397 168 397 160C397 152 401 143 407 137L457 87C463 81 472 77 480 77C488 77 497 81 503 87L969 553C975 559 979 568 979 576Z"/></svg><svg class="abs" style="left:24.8px;top:13.0px" width="12.00" height="14" viewBox="0 -1536 1536 1792"><path fill="#d0d0d0" stroke="#d0d0d0" stroke-width="0" transform="scale(1,-1)" d="M1468 1156 1156 1468C1119 1505 1045 1536 992 1536H96C43 1536 0 1493 0 1440V-160C0 -213 43 -256 96 -256H1440C1493 -256 1536 -213 1536 -160V992C1536 1045 1505 1119 1468 1156ZM1024 1400C1041 1394 1058 1385 1065 1378L1378 1065C1385 1058 1394 1041 1400 1024H1024ZM1408 -128H128V1408H896V992C896 939 939 896 992 896H1408ZM384 736V672C384 654 398 640 416 640H1120C1138 640 1152 654 1152 672V736C1152 754 1138 768 1120 768H416C398 768 384 754 384 736ZM1120 512H416C398 512 384 498 384 480V416C384 398 398 384 416 384H1120C1138 384 1152 398 1152 416V480C1152 498 1138 512 1120 512ZM1120 256H416C398 256 384 242 384 224V160C384 142 398 128 416 128H1120C1138 128 1152 142 1152 160V224C1152 242 1138 256 1120 256Z"/></svg><span class="t2" style="left:41.2px">Information</span></div>
<div class="mi sub" style="top:237px;background:#222222;color:#8f8f8f"><svg class="abs" style="left:24.8px;top:13.0px" width="13.00" height="14" viewBox="0 -1536 1664 1792"><path fill="#8f8f8f" stroke="#8f8f8f" stroke-width="0" transform="scale(1,-1)" d="M512 160C512 142 498 128 480 128H160C142 128 128 142 128 160V352C128 370 142 384 160 384H480C498 384 512 370 512 352V160ZM512 544C512 526 498 512 480 512H160C142 512 128 526 128 544V736C128 754 142 768 160 768H480C498 768 512 754 512 736V544ZM1024 160C1024 142 1010 128 992 128H672C654 128 640 142 640 160V352C640 370 654 384 672 384H992C1010 384 1024 370 1024 352V160ZM512 928C512 910 498 896 480 896H160C142 896 128 910 128 928V1120C128 1138 142 1152 160 1152H480C498 1152 512 1138 512 1120V928ZM1024 544C1024 526 1010 512 992 512H672C654 512 640 526 640 544V736C640 754 654 768 672 768H992C1010 768 1024 754 1024 736V544ZM1536 160C1536 142 1522 128 1504 128H1184C1166 128 1152 142 1152 160V352C1152 370 1166 384 1184 384H1504C1522 384 1536 370 1536 352V160ZM1024 928C1024 910 1010 896 992 896H672C654 896 640 910 640 928V1120C640 1138 654 1152 672 1152H992C1010 1152 1024 1138 1024 1120V928ZM1536 544C1536 526 1522 512 1504 512H1184C1166 512 1152 526 1152 544V736C1152 754 1166 768 1184 768H1504C1522 768 1536 754 1536 736V544ZM1536 928C1536 910 1522 896 1504 896H1184C1166 896 1152 910 1152 928V1120C1152 1138 1166 1152 1184 1152H1504C1522 1152 1536 1138 1536 1120V928ZM1664 1248C1664 1336 1592 1408 1504 1408H160C72 1408 0 1336 0 1248V160C0 72 72 0 160 0H1504C1592 0 1664 72 1664 160Z"/></svg><span class="t2" style="left:42.3px">Consumption</span></div>
</div>
  <div id="ptr"></div>
  <div id="main">
    <div id="pagehead"><h1>Server Information</h1></div>
    <div id="crumbs">
      <span style="left:25px">Home</span><svg class="abs" style="left:67.5px;top:10.2px" width="8" height="12" viewBox="0 0 8 12"><path d="M1.2 0.8 L6.6 6 L1.2 11.2" fill="none" stroke="#777" stroke-width="1.2"/></svg>
      <span style="left:89px"><b>Server Information</b></span><svg class="abs" style="left:199.0px;top:10.2px" width="8" height="12" viewBox="0 0 8 12"><path d="M1.2 0.8 L6.6 6 L1.2 11.2" fill="none" stroke="#777" stroke-width="1.2"/></svg>
      <span style="left:220px"><b>Period filter: all</b></span><svg class="abs" style="left:313.5px;top:10.2px" width="8" height="12" viewBox="0 0 8 12"><path d="M1.2 0.8 L6.6 6 L1.2 11.2" fill="none" stroke="#777" stroke-width="1.2"/></svg>
      <span style="left:335px"><b>Selection filter: all</b></span>
    </div>
    <div id="box">
      <div id="boxhead">Server table</div>
    </div>
    <span id="searchlbl">Search:</span>
    <div id="searchinp"></div>
    <span id="showlbl">Show</span>
    <div id="showsel"><span>10</span><svg class="abs" style="left:34.5px;top:7px" width="6" height="5" viewBox="0 0 6 5"><path d="M0 0 L6 0 L3 4.8Z" fill="#777"/></svg></div>
    <span id="entlbl">entries</span>
    <div id="gearbtn"><svg class="abs" style="left:8.3px;top:8.2px" width="9.86" height="11.5" viewBox="0 -1536 1536 1792"><path fill="#111" stroke="#111" stroke-width="0" transform="scale(1,-1)" d="M1024 640C1024 499 909 384 768 384C627 384 512 499 512 640C512 781 627 896 768 896C909 896 1024 781 1024 640ZM1536 749C1536 766 1524 782 1507 785L1324 813C1314 846 1300 879 1283 911C1317 958 1354 1002 1388 1048C1393 1055 1396 1062 1396 1071C1396 1079 1394 1087 1389 1093C1347 1152 1277 1214 1224 1263C1217 1269 1208 1273 1199 1273C1190 1273 1181 1270 1175 1264L1033 1157C1004 1172 974 1184 943 1194L915 1378C913 1395 897 1408 879 1408H657C639 1408 625 1396 621 1380C605 1320 599 1255 592 1194C561 1184 530 1171 501 1156L363 1263C355 1269 346 1273 337 1273C303 1273 168 1127 144 1094C139 1087 135 1080 135 1071C135 1062 139 1054 145 1047C182 1002 218 957 252 909C236 879 223 849 213 817L27 789C12 786 0 768 0 753V531C0 514 12 498 29 495L212 468C222 434 236 401 253 369C219 322 182 278 148 232C143 225 140 218 140 209C140 201 142 193 147 186C189 128 259 66 312 18C319 11 328 7 337 7C346 7 355 10 362 16L503 123C532 108 562 96 593 86L621 -98C623 -115 639 -128 657 -128H879C897 -128 911 -116 915 -100C931 -40 937 25 944 86C975 96 1006 109 1035 124L1173 16C1181 11 1190 7 1199 7C1233 7 1368 154 1392 186C1398 193 1401 200 1401 209C1401 218 1397 227 1391 234C1354 279 1318 323 1284 372C1300 401 1312 431 1323 463L1508 491C1524 494 1536 512 1536 527Z"/></svg></div>
    <div id="pag"><span class="pb dis" style="left:953.3px;width:46.2px">First</span><span class="pb dis" style="left:999.5px;width:68.9px">Previous</span><span class="pb act" style="left:1067.4px;width:26.2px">1</span><span class="pb " style="left:1092.6px;width:26.6px">2</span><span class="pb " style="left:1118.2px;width:26.2px">3</span><span class="pb " style="left:1143.4px;width:26.3px">4</span><span class="pb " style="left:1168.7px;width:26.3px">5</span><span class="pb " style="left:1194.0px;width:26.2px">6</span><span class="pb " style="left:1219.2px;width:47.1px">Next</span><span class="pb " style="left:1265.3px;width:46.5px">Last</span></div>
    <span class="th" style="left:49.0px;top:285.9px">Name</span>
    <svg class="abs" style="left:163.0px;top:289.5px" width="8" height="11" viewBox="0 0 8 11"><path d="M1 4.3 L4 1.3 L7 4.3 M1 6.7 L4 9.7 L7 6.7" fill="none" stroke="#b5360f" stroke-width="1.5"/></svg>
    <span class="th" style="left:278.5px;top:285.9px">Identifier</span>
    <svg class="abs" style="left:472.0px;top:289.5px" width="8" height="11" viewBox="0 0 8 11"><path d="M1 4.3 L4 1.3 L7 4.3 M1 6.7 L4 9.7 L7 6.7" fill="none" stroke="#b5360f" stroke-width="1.5"/></svg>
    <span class="th" style="left:496.4px;top:285.9px">OS</span>
    <svg class="abs" style="left:597.4px;top:292.8px" width="8" height="5" viewBox="0 0 8 5"><path d="M0 0 L8 0 L4 4.4Z" fill="#b5360f"/></svg>
    <span class="th" style="left:606.1px;top:285.9px">Model</span>
    <svg class="abs" style="left:692.2px;top:290.0px" width="8" height="11" viewBox="0 0 8 11"><path d="M1 4.3 L4 1.3 L7 4.3 M1 6.7 L4 9.7 L7 6.7" fill="none" stroke="#b5360f" stroke-width="1.5"/></svg>
    <span class="th" style="left:733.2px;top:285.9px">CPU Model</span>
    <svg class="abs" style="left:852.1px;top:290.0px" width="8" height="11" viewBox="0 0 8 11"><path d="M1 4.3 L4 1.3 L7 4.3 M1 6.7 L4 9.7 L7 6.7" fill="none" stroke="#b5360f" stroke-width="1.5"/></svg>
    <span class="th" style="left:843.6px;top:278.0px">CPU#</span>
    <svg class="abs" style="left:897.3px;top:297.4px" width="8" height="11" viewBox="0 0 8 11"><path d="M1 4.3 L4 1.3 L7 4.3 M1 6.7 L4 9.7 L7 6.7" fill="none" stroke="#b5360f" stroke-width="1.5"/></svg>
    <span class="th" style="left:896.9px;top:278.0px">CORES#</span>
    <svg class="abs" style="left:958.3px;top:297.4px" width="8" height="11" viewBox="0 0 8 11"><path d="M1 4.3 L4 1.3 L7 4.3 M1 6.7 L4 9.7 L7 6.7" fill="none" stroke="#b5360f" stroke-width="1.5"/></svg>
    <span class="th" style="left:964.7px;top:278.0px">THREADS#</span>
    <svg class="abs" style="left:1033.3px;top:297.4px" width="8" height="11" viewBox="0 0 8 11"><path d="M1 4.3 L4 1.3 L7 4.3 M1 6.7 L4 9.7 L7 6.7" fill="none" stroke="#b5360f" stroke-width="1.5"/></svg>
    <span class="th" style="left:1026.4px;top:271.1px">CPU</span>
    <span class="th" style="left:1026.8px;top:286.1px">Freq.</span>
    <svg class="abs" style="left:1081.2px;top:305.6px" width="8" height="11" viewBox="0 0 8 11"><path d="M1 4.3 L4 1.3 L7 4.3 M1 6.7 L4 9.7 L7 6.7" fill="none" stroke="#b5360f" stroke-width="1.5"/></svg>
    <span class="th" style="left:1082.0px;top:278.0px">Ram</span>
    <span class="th" style="left:1074.0px;top:293.0px">Cap.</span>
    <svg class="abs" style="left:1145.0px;top:297.4px" width="8" height="11" viewBox="0 0 8 11"><path d="M1 4.3 L4 1.3 L7 4.3 M1 6.7 L4 9.7 L7 6.7" fill="none" stroke="#b5360f" stroke-width="1.5"/></svg>
    <span class="th" style="left:1151.0px;top:278.0px">Power</span>
    <span class="th" style="left:1142.2px;top:293.0px">Min.</span>
    <svg class="abs" style="left:1217.3px;top:297.4px" width="8" height="11" viewBox="0 0 8 11"><path d="M1 4.3 L4 1.3 L7 4.3 M1 6.7 L4 9.7 L7 6.7" fill="none" stroke="#b5360f" stroke-width="1.5"/></svg>
    <span class="th" style="left:1222.9px;top:278.0px">Power</span>
    <span class="th" style="left:1214.2px;top:293.0px">Max.</span>
    <svg class="abs" style="left:1289.0px;top:297.4px" width="8" height="11" viewBox="0 0 8 11"><path d="M1 4.3 L4 1.3 L7 4.3 M1 6.7 L4 9.7 L7 6.7" fill="none" stroke="#b5360f" stroke-width="1.5"/></svg>
    <div id="thline"></div>
    <table id="tbl"><colgroup><col style="width:151px"><col style="width:309px"><col style="width:126px"><col style="width:94px"><col style="width:160px"><col style="width:45px"><col style="width:61px"><col style="width:75px"><col style="width:48px"><col style="width:63px"><col style="width:73px"><col style="width:72px"></colgroup>
<tr class="odd"><td class="nm"><div class="wb" style="left:3px;top:5.0px;width:124px;height:68px"></div></td><td class="id">0425E475-73B1-43FD-A1D0-<br>73A2B985CE4C-4c4c4544-0030-5a10-8046-<br>c2c04f355931</td><td>VMware ESXi<br>6.0.0 build-<br>3620759</td><td>PowerEdge<br>R620</td><td class="cm">Intel(R) Xeon(R) CPU<br>E5-2640 0 @ 2.50GHz</td><td class="c">2</td><td class="c">12</td><td class="c">24</td><td class="c">2499</td><td class="c">262098</td><td class="c">not<br>available</td><td class="c">not<br>available</td></tr>
<tr class="even"><td class="nm"><div class="wb" style="left:4px;top:11.0px;width:119px;height:56px"></div></td><td class="id">0425E475-73B1-43FD-A1D0-<br>73A2B985CE4C-4c4c4544-005a-5910-8046-<br>b8c04f355931</td><td>VMware ESXi<br>6.0.0 build-<br>3620759</td><td>PowerEdge<br>R620</td><td class="cm">Intel(R) Xeon(R) CPU<br>E5-2640 0 @ 2.50GHz</td><td class="c">2</td><td class="c">12</td><td class="c">24</td><td class="c">2499</td><td class="c">262098</td><td class="c">not<br>available</td><td class="c">not<br>available</td></tr>
<tr class="odd"><td class="nm"><div class="wb" style="left:5px;top:7.0px;width:118px;height:63px"></div></td><td class="id">0425E475-73B1-43FD-A1D0-<br>73A2B985CE4C-30343536-3138-5a43-4a32-<br>313730465847</td><td>VMware ESXi<br>6.0.0 build-<br>3620759</td><td>ProLiant<br>DL360p<br>Gen8</td><td class="cm">Intel(R) Xeon(R) CPU<br>E5-2650 0 @ 2.00GHz</td><td class="c">2</td><td class="c">16</td><td class="c">32</td><td class="c">1995</td><td class="c">196573</td><td class="c">not<br>available</td><td class="c">not<br>available</td></tr>
<tr class="even"><td class="nm"><div class="wb" style="left:6px;top:4.0px;width:124px;height:66px"></div></td><td class="id">0425E475-73B1-43FD-A1D0-<br>73A2B985CE4C-39363436-3530-5a43-4a32-<br>3530304b324b</td><td>VMware ESXi<br>6.0.0 build-<br>3620759</td><td>ProLiant<br>DL360p<br>Gen8</td><td class="cm">Intel(R) Xeon(R) CPU<br>E5-2690 0 @ 2.90GHz</td><td class="c">2</td><td class="c">16</td><td class="c">32</td><td class="c">2893</td><td class="c">229341</td><td class="c">not<br>available</td><td class="c">not<br>available</td></tr>
<tr class="odd"><td class="nm"><div class="wb" style="left:2px;top:8.0px;width:120px;height:63px"></div></td><td class="id">0425E475-73B1-43FD-A1D0-<br>73A2B985CE4C-39363436-3530-5a43-4a32-<br>343930525a34</td><td>VMware ESXi<br>6.0.0 build-<br>3620759</td><td>ProLiant<br>DL360p<br>Gen8</td><td class="cm">Intel(R) Xeon(R) CPU<br>E5-2690 0 @ 2.90GHz</td><td class="c">2</td><td class="c">16</td><td class="c">32</td><td class="c">2893</td><td class="c">196573</td><td class="c">not<br>available</td><td class="c">not<br>available</td></tr>
<tr class="even"><td class="nm"><div class="wb" style="left:7px;top:12.0px;width:120px;height:52px"></div></td><td class="id">0425E475-73B1-43FD-A1D0-<br>73A2B985CE4C-44454c4c-4700-1059-8056-<br>c2c04f355931</td><td>VMware ESXi<br>6.0.0 build-<br>3620759</td><td>PowerEdge<br>2950</td><td class="cm">Intel(R) Xeon(R) CPU<br>E5405 @ 2.00GHz</td><td class="c">2</td><td class="c">8</td><td class="c">8</td><td class="c">1994</td><td class="c">64506</td><td class="c">not<br>available</td><td class="c">not<br>available</td></tr>
    </table>
    <div id="sbar"><div id="sthumb"></div><svg class="abs" style="left:5px;top:605px" width="8" height="5" viewBox="0 0 8 5"><path d="M0 0 L8 0 L4 4.2Z" fill="#505050"/></svg></div>
    <div id="cogtab"><svg class="abs" style="left:6.5px;top:7.0px" width="21.43" height="20" viewBox="0 -1536 1920 1792"><path fill="#fff" stroke="#fff" stroke-width="50" transform="scale(1,-1)" d="M896 640C896 499 781 384 640 384C499 384 384 499 384 640C384 781 499 896 640 896C781 896 896 781 896 640ZM1664 128C1664 58 1607 0 1536 0C1466 0 1408 57 1408 128C1408 198 1466 256 1536 256C1606 256 1664 198 1664 128ZM1664 1152C1664 1082 1607 1024 1536 1024C1466 1024 1408 1081 1408 1152C1408 1222 1466 1280 1536 1280C1606 1280 1664 1222 1664 1152ZM1280 731C1280 745 1270 758 1256 761L1104 784C1095 812 1083 839 1070 866C1098 905 1128 941 1157 980C1161 986 1164 992 1164 999C1164 1027 1046 1135 1020 1159C1014 1164 1007 1167 999 1167C992 1167 985 1165 979 1160L861 1071C837 1083 812 1094 786 1102L763 1255C761 1269 747 1280 733 1280H547C533 1280 521 1270 517 1256C504 1207 499 1152 494 1102C467 1093 442 1083 417 1070L302 1160C296 1164 289 1167 281 1167C252 1167 140 1046 120 1019C115 1013 113 1006 113 999C113 992 116 985 120 979C152 941 182 904 210 864C197 839 186 814 178 788L23 764C10 762 0 747 0 734V549C0 535 10 522 24 520L176 496C185 468 197 441 211 414C182 375 152 338 123 300C119 294 116 288 116 281C116 252 234 145 260 121C266 116 273 113 281 113C288 113 296 115 301 120L419 209C443 197 468 186 494 178L517 25C519 11 533 0 547 0H733C747 0 759 10 763 24C776 73 781 128 786 179C813 187 838 197 863 210L978 120C984 116 991 113 999 113C1028 113 1140 235 1160 262C1165 267 1167 274 1167 281C1167 289 1164 295 1160 301C1128 339 1098 376 1070 416C1083 441 1094 466 1102 492L1257 516C1270 518 1280 533 1280 546ZM1920 198C1920 213 1791 227 1771 229C1763 247 1753 265 1741 281C1750 301 1792 401 1792 419C1792 421 1791 424 1788 426C1776 433 1669 496 1664 496L1658 494C1624 460 1594 421 1566 382C1556 383 1546 384 1536 384C1526 384 1516 383 1506 382C1496 397 1421 496 1408 496C1403 496 1296 432 1284 426C1281 424 1280 421 1280 419C1280 402 1322 301 1331 281C1319 265 1309 247 1301 229C1281 227 1152 213 1152 198V58C1152 43 1281 29 1301 27C1309 8 1319 -9 1331 -25C1322 -45 1280 -146 1280 -163C1280 -165 1281 -168 1284 -170C1296 -177 1403 -241 1408 -241C1421 -241 1496 -141 1506 -126C1516 -127 1526 -128 1536 -128C1546 -128 1556 -127 1566 -126C1576 -141 1651 -241 1664 -241C1669 -241 1776 -177 1788 -170C1791 -168 1792 -166 1792 -163C1792 -145 1750 -45 1741 -25C1753 -9 1763 8 1771 27C1791 29 1920 43 1920 58ZM1920 1222C1920 1237 1791 1251 1771 1253C1763 1271 1753 1289 1741 1305C1750 1325 1792 1425 1792 1443C1792 1445 1791 1448 1788 1450C1776 1457 1669 1520 1664 1520L1658 1518C1624 1484 1594 1445 1566 1406C1556 1407 1546 1408 1536 1408C1526 1408 1516 1407 1506 1406C1496 1421 1421 1520 1408 1520C1403 1520 1296 1456 1284 1450C1281 1448 1280 1445 1280 1443C1280 1426 1322 1325 1331 1305C1319 1289 1309 1271 1301 1253C1281 1251 1152 1237 1152 1222V1082C1152 1067 1281 1053 1301 1051C1309 1032 1319 1015 1331 999C1322 979 1280 878 1280 861C1280 859 1281 856 1284 854C1296 847 1403 783 1408 783C1421 783 1496 883 1506 898C1516 897 1526 896 1536 896C1546 896 1556 897 1566 898C1576 883 1651 783 1664 783C1669 783 1776 847 1788 854C1791 856 1792 858 1792 861C1792 879 1750 979 1741 999C1753 1015 1763 1032 1771 1051C1791 1053 1920 1067 1920 1082Z"/></svg></div>
  </div>

<div id="footer"><span class="ct">Contact</span><br>2016 © EasyVirt<br>Release: 3.1.1 Build: 1492_160928</div>
</div>
<div id="frame"></div>
</body>
</html>
